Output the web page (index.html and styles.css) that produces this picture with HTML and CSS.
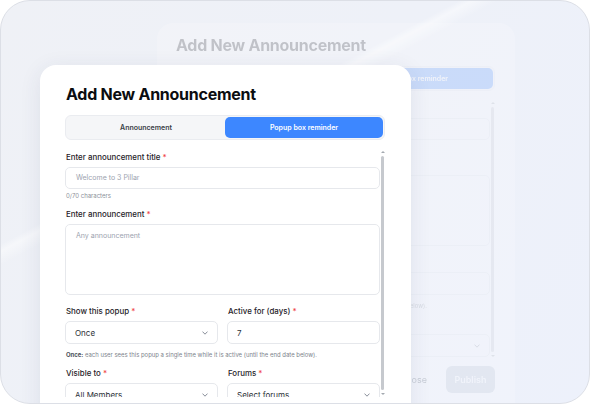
FILE: index.html
```html
<!DOCTYPE html>
<html lang="en">
<head>
<meta charset="utf-8">
<title>Add New Announcement</title>
<link rel="stylesheet" href="styles.css">
</head>
<body>
<div class="frame">
  <div class="dialog dialog--ghost" aria-hidden="true">
    <h1 class="dialog__title">Add New Announcement</h1>
    <div class="tabs">
      <div class="tab">Announcement</div>
      <div class="tab tab--active">Popup box reminder</div>
    </div>
    <div class="scroll scroll--ghost">
      <div class="form">
        <div class="field">
          <label class="label">Enter announcement title <span class="req">*</span></label>
          <div class="input"><span class="placeholder">Welcome to 3 Pillar</span></div>
          <div class="hint">0/70 characters</div>
        </div>
        <div class="field field--gap">
          <label class="label">Enter announcement <span class="req">*</span></label>
          <div class="input input--area"><span class="placeholder">Any announcement</span></div>
        </div>
        <div class="row">
          <div class="field">
            <label class="label">Show this popup <span class="req">*</span></label>
            <div class="input input--select"><span>Once</span><svg class="chev" viewBox="0 0 6 4" width="6" height="4"><polyline points="0.5,0.6 3,3.2 5.5,0.6"/></svg></div>
          </div>
          <div class="field">
            <label class="label">Active for (days) <span class="req">*</span></label>
            <div class="input input--select"><span>7</span></div>
          </div>
        </div>
        <div class="help"><b>Once:</b> each user sees this popup a single time while it is active (until the end date below).</div>
        <div class="row row--tight">
          <div class="field">
            <label class="label">Visible to <span class="req">*</span></label>
            <div class="input input--select"><span>All Members</span><svg class="chev" viewBox="0 0 6 4" width="6" height="4"><polyline points="0.5,0.6 3,3.2 5.5,0.6"/></svg></div>
          </div>
          <div class="field">
            <label class="label">Forums <span class="req">*</span></label>
            <div class="input input--select"><span>Select forums</span><svg class="chev" viewBox="0 0 6 4" width="6" height="4"><polyline points="0.5,0.6 3,3.2 5.5,0.6"/></svg></div>
          </div>
        </div>
      </div>
      <div class="scrollbar"><span class="sb-up"></span><span class="sb-thumb"></span><span class="sb-down"></span></div>
    </div>
    <div class="footer">
      <button class="btn-close" type="button">Close</button>
      <button class="btn-publish" type="button">Publish</button>
    </div>
  </div>

  <div class="dialog dialog--main">
    <h1 class="dialog__title">Add New Announcement</h1>
    <div class="tabs">
      <div class="tab">Announcement</div>
      <div class="tab tab--active">Popup box reminder</div>
    </div>
    <div class="scroll">
      <div class="form">
        <div class="field">
          <label class="label">Enter announcement title <span class="req">*</span></label>
          <div class="input"><span class="placeholder">Welcome to 3 Pillar</span></div>
          <div class="hint">0/70 characters</div>
        </div>
        <div class="field field--gap">
          <label class="label">Enter announcement <span class="req">*</span></label>
          <div class="input input--area"><span class="placeholder">Any announcement</span></div>
        </div>
        <div class="row">
          <div class="field">
            <label class="label">Show this popup <span class="req">*</span></label>
            <div class="input input--select"><span>Once</span><svg class="chev" viewBox="0 0 6 4" width="6" height="4"><polyline points="0.5,0.6 3,3.2 5.5,0.6"/></svg></div>
          </div>
          <div class="field">
            <label class="label">Active for (days) <span class="req">*</span></label>
            <div class="input input--select"><span>7</span></div>
          </div>
        </div>
        <div class="help"><b>Once:</b> each user sees this popup a single time while it is active (until the end date below).</div>
        <div class="row row--tight">
          <div class="field">
            <label class="label">Visible to <span class="req">*</span></label>
            <div class="input input--select"><span>All Members</span><svg class="chev" viewBox="0 0 6 4" width="6" height="4"><polyline points="0.5,0.6 3,3.2 5.5,0.6"/></svg></div>
          </div>
          <div class="field">
            <label class="label">Forums <span class="req">*</span></label>
            <div class="input input--select"><span>Select forums</span><svg class="chev" viewBox="0 0 6 4" width="6" height="4"><polyline points="0.5,0.6 3,3.2 5.5,0.6"/></svg></div>
          </div>
        </div>
      </div>
      <div class="scrollbar"><span class="sb-up"></span><span class="sb-thumb"></span><span class="sb-down"></span></div>
    </div>
    <div class="footer">
      <button class="btn-close" type="button">Close</button>
      <button class="btn-publish" type="button">Publish</button>
    </div>
  </div>
</div>
</body>
</html>
```

FILE: styles.css
```css
* { box-sizing: border-box; margin: 0; padding: 0; }
html, body { width: 590px; height: 404px; overflow: hidden; background: #ffffff; }
body { font-family: Inter, "Noto Sans", sans-serif; color: #1f2329; }

.frame {
  position: relative;
  width: 590px;
  height: 404px;
  border: 1px solid #dcdfe6;
  border-radius: 30px;
  overflow: hidden;
  background:
    linear-gradient(152deg, rgba(255,255,255,0) 0 34%, rgba(255,255,255,0.45) 35%, rgba(255,255,255,0) 37%),
    linear-gradient(120deg, #eff1f6 0%, #eef1f8 50%, #edf1fb 100%);
}

.dialog {
  position: absolute;
  background: #ffffff;
  border-radius: 16px;
}
.dialog--main {
  left: 39px;
  top: 64px;
  width: 371px;
  height: 420px;
  padding: 18px 26px 0 25px;
  box-shadow: 0 4px 22px rgba(40, 52, 86, 0.09);
}
.dialog--ghost {
  left: 156px;
  top: 22px;
  width: 358px;
  height: 420px;
  padding: 11px 20px 0 18px;
  opacity: 0.2;
  filter: blur(0.4px);
}

.dialog__title {
  padding-left: 1px;
  font-size: 16px;
  line-height: 22px;
  font-weight: 700;
  color: #0b0d10;
  letter-spacing: -0.25px;
}

.tabs {
  margin-top: 10px;
  height: 25px;
  display: grid;
  grid-template-columns: 1fr 1fr;
  padding: 1px;
  background: #f5f6f8;
  border: 1px solid #eaecf0;
  border-radius: 6px;
}
.tab {
  display: flex;
  align-items: center;
  justify-content: center;
  font-size: 7px;
  font-weight: 600;
  color: #3a3f47;
  border-radius: 5px;
}
.tab--active { background: #3d87ff; color: #ffffff; }

.scroll {
  display: flex;
  margin-top: 8px;
  height: 249px;
  overflow: hidden;
}
.scroll--ghost { height: 260px; }

.form { flex: 0 0 315px; padding-top: 2.5px; }

.label {
  display: block;
  padding-left: 1px;
  font-size: 7.9px;
  line-height: 12px;
  font-weight: 500;
  color: #1f2329;
  margin-bottom: 4px;
}
.req { color: #ef4444; }

.input {
  height: 22px;
  border: 1px solid #e6e8ec;
  border-radius: 5px;
  padding: 0 10px;
  display: flex;
  align-items: center;
  justify-content: space-between;
  font-size: 8px;
  color: #2b2f36;
  background: #ffffff;
}
.placeholder { font-size: 7px; color: #9ca3af; }
.input--area { height: 71px; align-items: flex-start; padding-top: 6px; line-height: 9px; }
.input--select { height: 23px; padding: 0 9px; }

.chev { fill: none; stroke: #6b7280; stroke-width: 0.8; }

.hint {
  margin-top: 3.5px;
  padding-left: 1px;
  font-size: 6px;
  line-height: 8px;
  color: #8a9099;
}
.field--gap { margin-top: 7.5px; }

.row {
  display: grid;
  grid-template-columns: 1fr 1fr;
  gap: 9px;
  margin-top: 10.5px;
}
.row--tight { margin-top: 8px; }

.help {
  margin-top: 7.3px;
  padding-left: 1px;
  font-size: 5.95px;
  line-height: 8px;
  color: #7d838c;
  white-space: nowrap;
}
.help b { font-weight: 700; color: #4b5058; }

.scrollbar {
  flex: 0 0 5px;
  display: flex;
  flex-direction: column;
  align-items: center;
  padding: 3px 0 2px;
}
.sb-up, .sb-down {
  width: 0;
  height: 0;
  border-left: 2px solid transparent;
  border-right: 2px solid transparent;
}
.sb-up { border-bottom: 2.5px solid #a4a9b0; }
.sb-down { border-top: 2.5px solid #a4a9b0; }
.sb-thumb {
  flex: 1;
  width: 3px;
  margin: 3px 0;
  background: #c6c9ce;
  border-radius: 2px;
}

.footer {
  display: flex;
  justify-content: flex-end;
  align-items: center;
  gap: 9px;
  margin-top: 7px;
}
.btn-close {
  border: 0;
  background: transparent;
  padding: 0 10px;
  font-family: inherit;
  font-size: 9px;
  color: #374151;
}
.btn-publish {
  width: 49px;
  height: 27px;
  border: 0;
  border-radius: 6px;
  background: #b8c0ce;
  color: #ffffff;
  font-family: inherit;
  font-size: 9px;
  font-weight: 600;
}
```
